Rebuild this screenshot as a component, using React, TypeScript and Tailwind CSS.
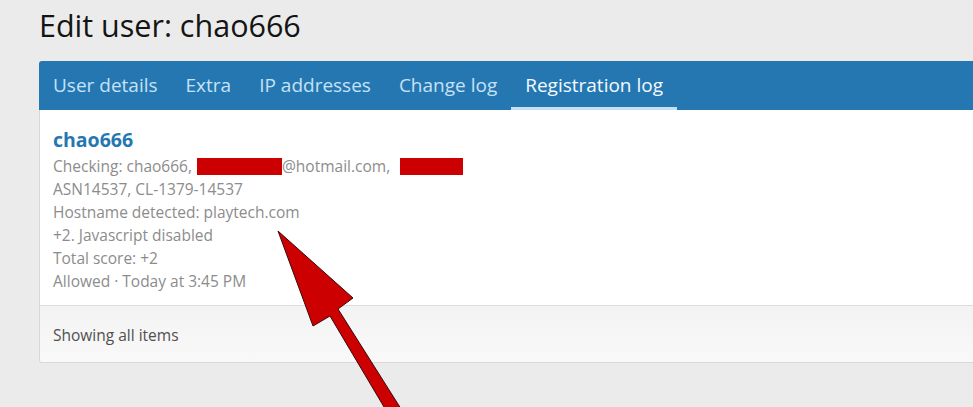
import React from "react";

export default function App() {
  const font = { fontFamily: '"Open Sans", "Noto Sans", sans-serif' };
  const tabs = ["User details", "Extra", "IP addresses", "Change log", "Registration log"];
  return (
    <div className="relative w-[973px] h-[407px] overflow-hidden bg-[#ebebeb]" style={font}>
      <div className="pl-[39px] pt-[5px]">
        <h1 className="text-[30.5px] leading-[40px] text-[#141414] h-[56px]">Edit user: chao666</h1>
        <div className="w-[960px] rounded-[3px] border border-[#d8d8d8] border-r-0 bg-white">
          <div className="flex h-[49px] bg-[#2577b1] rounded-t-[3px] -mx-px -mt-px">
            {tabs.map((t, i) => (
              <div
                key={t}
                className={
                  "flex items-center px-[14px] text-[19px] border-b-[3px] pt-[3px] " +
                  (i === 4 ? "border-[#c3e0f5] text-[#f4faff]" : "border-transparent text-[#c5e2f6]")
                }
              >
                {t}
              </div>
            ))}
          </div>
          <div className="px-[13px] pt-[18px] h-[195px] text-[15.5px] leading-[23px] text-[#8c8c8c]">
            <div className="text-[19.5px] font-bold leading-[24px] text-[#2577b1] mb-[3px]">chao666</div>
            <div className="flex items-center">
              <span>Checking: chao666,</span>
              <span className="inline-block w-[85px] h-[17px] bg-[#cc0000] ml-[5px]" />
              <span>@hotmail.com,</span>
              <span className="inline-block w-[63px] h-[17px] bg-[#cc0000] ml-[10px]" />
            </div>
            <div>ASN14537, CL-1379-14537</div>
            <div>Hostname detected: playtech.com</div>
            <div>+2. Javascript disabled</div>
            <div>Total score: +2</div>
            <div>Allowed · Today at 3:45 PM</div>
          </div>
          <div className="h-[57px] border-t border-[#dcdcdc] bg-gradient-to-b from-[#f3f3f3] to-[#f9f9f9] rounded-b-[3px] flex items-center pt-[3px] px-[13px] text-[15.5px] text-[#505050]">
            Showing all items
          </div>
        </div>
      </div>
      <svg className="absolute left-0 top-0" width="973" height="407" viewBox="0 0 973 407">
        <polygon
          points="278,231 353,298 338,309 403,412 387,412 330,316 313,326"
          fill="#cc0000"
          stroke="#3a0a0a"
          strokeWidth="1"
          strokeLinejoin="miter"
        />
      </svg>
    </div>
  );
}
